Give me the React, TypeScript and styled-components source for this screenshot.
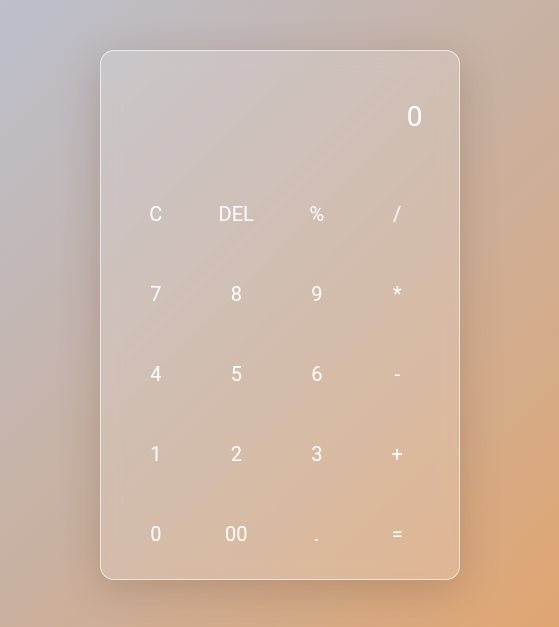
import React, { useState } from "react";
import styled, { createGlobalStyle } from "styled-components";

const Global = createGlobalStyle`
  html, body { margin: 0; padding: 0; height: 100%; }
  body {
    font-family: Roboto, "Liberation Sans", sans-serif;
    background: linear-gradient(135deg, #bcbfcc 0%, #c9b1a1 50%, #e0a672 100%);
    min-height: 627px;
  }
  #root { height: 100%; }
`;

const Page = styled.div`
  min-height: 627px;
  display: flex;
  justify-content: center;
  padding-top: 50px;
  box-sizing: border-box;
`;

const Card = styled.div`
  width: 360px;
  height: 530px;
  box-sizing: border-box;
  border-radius: 14px;
  border: 1px solid rgba(255, 255, 255, 0.6);
  background: rgba(255, 255, 255, 0.16);
  backdrop-filter: blur(10px);
  box-shadow: 0 10px 40px rgba(80, 50, 30, 0.22);
  display: flex;
  flex-direction: column;
  padding: 0 21px 5px 15px;
`;

const Display = styled.div`
  height: 124px;
  box-sizing: border-box;
  padding-top: 7px;
  display: flex;
  align-items: center;
  justify-content: flex-end;
  padding-right: 15px;
  color: #fff;
  font-size: 28px;
  font-weight: 400;
`;

const Keys = styled.div`
  display: grid;
  grid-template-columns: repeat(4, 1fr);
  grid-auto-rows: 80px;
`;

const Key = styled.button`
  border: none;
  background: transparent;
  color: rgba(255, 255, 255, 0.95);
  font-family: Roboto, "Liberation Sans", sans-serif;
  font-size: 20px;
  font-weight: 400;
  cursor: pointer;
  display: flex;
  align-items: center;
  justify-content: center;
  padding: 0;
`;

const keys = ["C", "DEL", "%", "/", "7", "8", "9", "*", "4", "5", "6", "-", "1", "2", "3", "+", "0", "00", ".", "="];

export default function App() {
  const [value] = useState("0");
  return (
    <>
      <Global />
      <Page>
        <Card>
          <Display>{value}</Display>
          <Keys>
            {keys.map((k) => (
              <Key key={k}>{k}</Key>
            ))}
          </Keys>
        </Card>
      </Page>
    </>
  );
}
